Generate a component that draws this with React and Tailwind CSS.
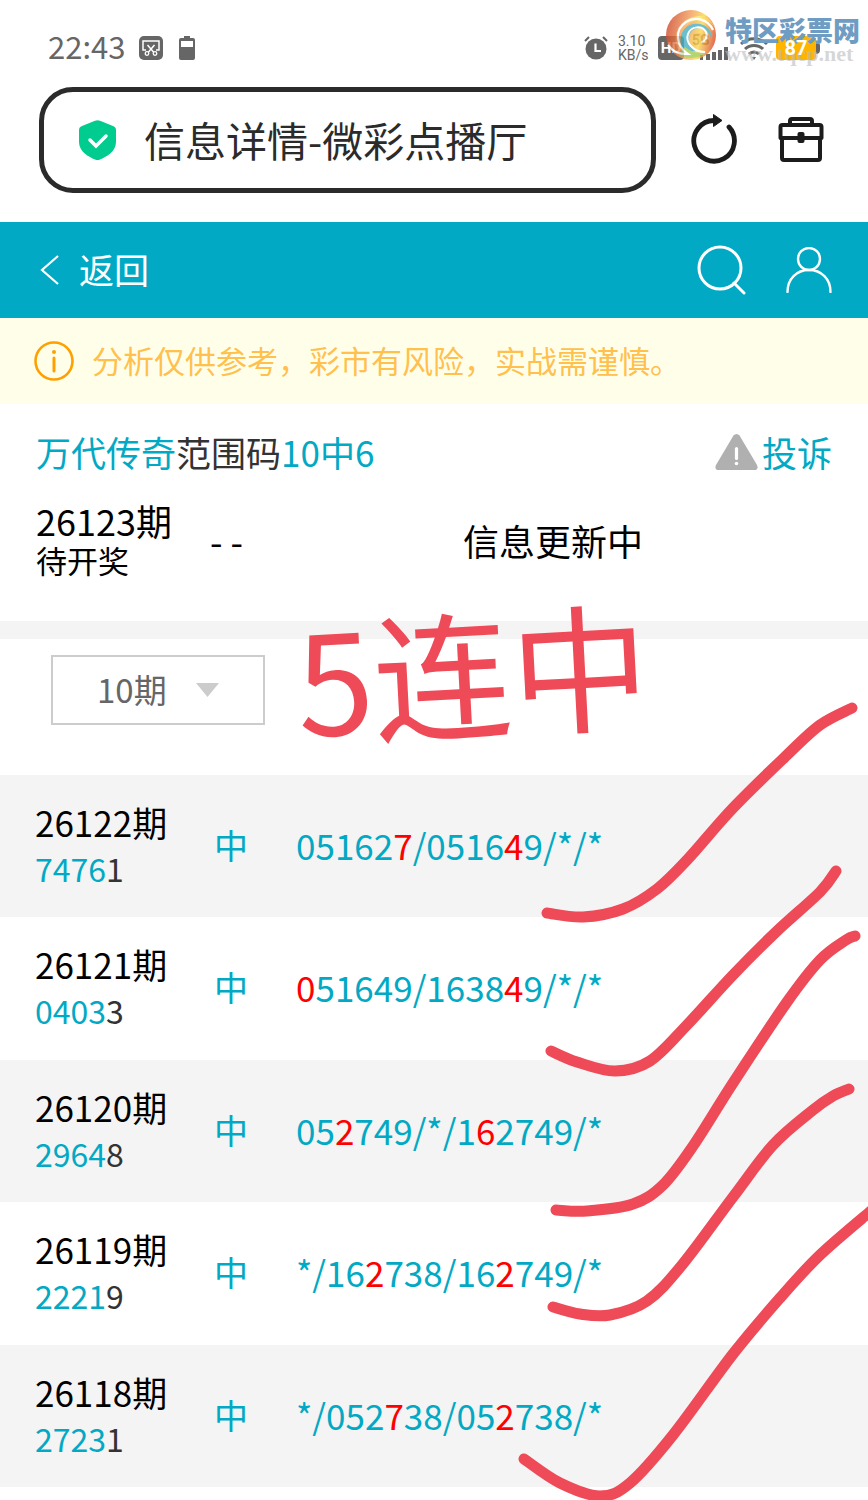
import React from "react";

const rows = [
  { period: "26122期", draw: "7476", last: "1", codes: "051627/051649/*/*", hits: [5, 11] },
  { period: "26121期", draw: "0403", last: "3", codes: "051649/163849/*/*", hits: [0, 11] },
  { period: "26120期", draw: "2964", last: "8", codes: "052749/*/162749/*", hits: [2, 10] },
  { period: "26119期", draw: "2221", last: "9", codes: "*/162738/162749/*", hits: [4, 11] },
  { period: "26118期", draw: "2723", last: "1", codes: "*/052738/052738/*", hits: [5, 11] },
];

const strokes = [
  [[547, 913], [583, 917], [623, 909], [657, 889], [687, 860], [733, 808], [787, 755], [820, 725], [852, 708]],
  [[551, 1051], [577, 1062], [615, 1071], [650, 1061], [687, 1025], [733, 975], [776, 932], [820, 892], [836, 871]],
  [[556, 1210], [587, 1211], [633, 1204], [663, 1185], [693, 1146], [733, 1083], [787, 1002], [820, 960], [846, 940], [855, 936]],
  [[553, 1307], [580, 1314], [610, 1315], [647, 1301], [682, 1265], [733, 1197], [773, 1145], [813, 1110], [833, 1096], [849, 1089]],
  [[524, 1459], [560, 1483], [600, 1496], [630, 1483], [673, 1435], [733, 1354], [780, 1298], [820, 1255], [872, 1210]],
];

// smooth curve through all the points
function curve(p) {
  let d = `M${p[0][0]} ${p[0][1]}`;
  for (let i = 0; i < p.length - 1; i++) {
    const a = p[i - 1] || p[i];
    const b = p[i];
    const c = p[i + 1];
    const e = p[i + 2] || c;
    d += ` C${b[0] + (c[0] - a[0]) / 6} ${b[1] + (c[1] - a[1]) / 6} ${c[0] - (e[0] - b[0]) / 6} ${c[1] - (e[1] - b[1]) / 6} ${c[0]} ${c[1]}`;
  }
  return d;
}

function StatusBar() {
  return (
    <div className="flex h-[87px] items-center pt-2 pr-12 pl-12 text-[#666]">
      <span className="pb-1 text-[31px] leading-10">22:43</span>
      <svg className="ml-[14px] h-6 w-6" viewBox="0 0 24 24" fill="none">
        <rect width="24" height="24" rx="5" fill="#666" />
        <path d="M7 14H4V5h16v9h-3" stroke="#fff" strokeWidth="1.5" />
        <path d="M8.5 9l6 7M15.500 9l-6 7" stroke="#fff" strokeWidth="1.5" />
        <circle cx="8" cy="17.500" r="1.800" stroke="#fff" strokeWidth="1.300" />
        <circle cx="16" cy="17.500" r="1.800" stroke="#fff" strokeWidth="1.300" />
      </svg>
      <svg className="ml-4 h-6 w-4" viewBox="0 0 16 24">
        <path d="M5 0h6v2h3a2 2 0 0 1 2 2v18a2 2 0 0 1-2 2H2a2 2 0 0 1-2-2V4a2 2 0 0 1 2-2h3z" fill="#666" />
        <rect x="2" y="5" width="12" height="6" fill="#fff" />
      </svg>
      <svg className="ml-auto h-6 w-6" viewBox="0 0 24 24" fill="none">
        <circle cx="12" cy="13" r="10.500" fill="#666" />
        <path d="M1 5l4-4M23 5l-4-4" stroke="#666" strokeWidth="2" />
        <path d="M11.500 7.500V15H17" stroke="#fff" strokeWidth="2.200" />
      </svg>
      <div className="ml-[10px] w-8 font-[Roboto] text-[14px] leading-[14px]">
        <div>3.10</div>
        <div>KB/s</div>
      </div>
      <span className="ml-2 w-[26px] rounded bg-[#666] text-center font-[Roboto] text-[15px] leading-6 font-bold text-white">HD</span>
      <div className="relative ml-2 h-6 w-9">
        <span className="absolute -top-1 left-0 font-[Roboto] text-[14px] leading-4 font-bold">5G</span>
        <svg className="h-6 w-9" viewBox="0 0 36 24" fill="#666">
          <path d="M8 19h3v5H8zM14 18h4v6h-4zM20 16h4v8h-4zM26 14h4v10h-4zM32 11h4v13h-4z" />
        </svg>
      </div>
      <svg className="ml-3 h-6 w-7" viewBox="0 0 28 24" fill="none" stroke="#666" strokeWidth="3">
        <path d="M1 8a19 19 0 0 1 26 0M5 13a13 13 0 0 1 18 0M9 18a7 7 0 0 1 10 0" />
        <path d="M12 21h4l-2 3z" fill="#666" stroke="none" />
      </svg>
      <div className="ml-2 flex items-center">
        <div className="h-6 w-10 rounded bg-[#ffb400] text-center">
          <span className="relative z-10 font-[Roboto] text-[20px] leading-6 font-bold text-white">87</span>
        </div>
        <span className="h-3 w-1 rounded-r bg-[#666]" />
      </div>
    </div>
  );
}

function Watermark() {
  return (
    <div className="pointer-events-none absolute top-2 right-2 flex gap-[7px]">
      <svg className="h-[54px] w-[54px]" viewBox="0 0 54 54" fill="none" opacity="0.8">
        <defs>
          <linearGradient id="ball" x1="0" y1="0.300" x2="1" y2="0.500">
            <stop offset="0" stopColor="#d04428" />
            <stop offset="0.450" stopColor="#f3a05a" />
            <stop offset="0.700" stopColor="#fbd84e" />
            <stop offset="1" stopColor="#dc4c2c" />
          </linearGradient>
          <linearGradient id="top" x1="0" y1="0" x2="1" y2="0">
            <stop offset="0" stopColor="#f08a50" />
            <stop offset="0.600" stopColor="#fdec52" />
            <stop offset="1" stopColor="#f7b03a" />
          </linearGradient>
        </defs>
        <circle cx="27" cy="27" r="25" fill="url(#ball)" />
        <path d="M13 40C8 24 17 10 34 8c9-1 14 5 16 11C44 8 26 10 20 22c-4 9-2 17 2 23z" fill="url(#top)" />
        <path d="M20 44c-7-12-3-25 9-28 12-2 20 6 19 16-3-10-10-14-17-11-9 4-8 16 1 22z" fill="#45aec2" />
        <path d="M15 46c8 6 20 5 27-2-7 2-15 0-21-5z" fill="#a0cc50" />
        <path d="M28 38c-4-6-1-13 6-13 6 0 8 6 5 10 0-4-3-6-6-5-3 2-3 5-1 8z" fill="#f6c048" />
        <path d="M4 37C10 45 16 46 24 46C12 38 10 22 22 14c9-6 22-3 27 8" stroke="#fff" strokeWidth="2.200" />
        <path d="M41 44c-12 0-20-10-17-18 3-8 14-9 18-2 2 5-1 10-5 10" stroke="#fff" strokeWidth="2" />
      </svg>
      <div>
        <div className="text-[27px] leading-[44px] font-black text-[#6f9cc3]">特区彩票网</div>
        <div className="-mt-2 font-['Liberation_Serif'] text-[22px] leading-5 font-bold text-[#bbbbbb]/60">www.tqcp.net</div>
      </div>
    </div>
  );
}

function AddressBar() {
  return (
    <div className="flex h-[135px] items-start pr-11 pl-[39px]">
      <label className="flex h-[106px] min-w-0 flex-1 items-center rounded-[34px] border-5 border-[#2b2b2b] pl-[35px]">
        <svg className="h-10 w-[37px] shrink-0" viewBox="0 0 37 40" fill="none">
          <path d="M16 0.800q2.500-1.300 5 0L34 6q3 1.200 3 4v12c0 10-10 15-16 17.500q-2.500 1-5 0C10 37 0 32 0 22V10q0-2.800 3-4z" fill="#00cc8f" />
          <path d="M11 20l6 6 10-10" stroke="#fff" strokeWidth="3.500" strokeLinecap="round" />
        </svg>
        <input
          className="ml-7 min-w-0 flex-1 bg-transparent pb-[2px] text-[41px] leading-[56px] text-[#2b2b2b] outline-none"
          aria-label="地址"
          defaultValue="信息详情-微彩点播厅"
        />
      </label>
      <button className="mt-[26px] ml-[35px]" aria-label="刷新">
        <svg className="h-[52px] w-[46px]" viewBox="0 0 46 52" fill="none">
          <path d="M38 14a20.300 20.300 0 1 1-15-6.500" stroke="#1c1c1c" strokeWidth="4.800" strokeLinecap="round" />
          <path d="M22.500 1.500v12l8.500-6z" fill="#1c1c1c" stroke="#1c1c1c" strokeLinejoin="round" />
        </svg>
      </button>
      <button className="mt-[30px] ml-[41px]" aria-label="工具箱">
        <svg className="h-[46px] w-[46px]" viewBox="0 0 46 46" fill="none" stroke="#1c1c1c" strokeWidth="4" strokeLinejoin="round">
          <path d="M12 8V4q0-2 2-2h18q2 0 2 2v4M2.500 10q0-2 2-2h37q2 0 2 2v11h-41zM4 21v20q0 2 2 2h34q2 0 2-2V21" />
          <rect x="21.500" y="17" width="3" height="7" />
        </svg>
      </button>
    </div>
  );
}

function Header() {
  return (
    <header className="flex h-24 items-center bg-[#02a9c4] pr-9 pl-10 text-white">
      <a href="#" className="flex items-center text-[35px] leading-[48px]">
        <svg className="mr-5 h-[30px] w-[19px]" viewBox="0 0 19 30" fill="none" stroke="#fff" strokeWidth="2.200">
          <path d="M18 1L2 15l16 14" />
        </svg>
        <span className="pb-[3px]">返回</span>
      </a>
      <button className="ml-auto" aria-label="搜索">
        <svg className="h-[50px] w-[50px]" viewBox="0 0 50 50" fill="none" stroke="#fff" strokeWidth="3" strokeLinecap="round">
          <circle cx="24" cy="23" r="21" />
          <path d="M38 38l10 10" />
        </svg>
      </button>
      <button className="ml-10" aria-label="我的">
        <svg className="h-[46px] w-[46px]" viewBox="0 0 46 46" fill="none" stroke="#fff" strokeWidth="2.400" strokeLinecap="round">
          <circle cx="23" cy="12" r="11" />
          <path d="M1.500 45c0-13 9-22 21.500-22s21.500 9 21.500 22" />
        </svg>
      </button>
    </header>
  );
}

function Current() {
  return (
    <section className="h-[217px] px-9 pt-6">
      <div className="flex items-center justify-between text-[35px] leading-[48px] text-[#02a9c4]">
        <h1>
          万代传奇<span className="text-[#333]">范围码</span>10中6
        </h1>
        <a href="#" className="flex items-center">
          <svg className="mr-1 h-9 w-[43px]" viewBox="0 0 43 36">
            <path d="M18.500 1.500q3-3 6 0L42 31q2 5-3 5H4q-5 0-3-5z" fill="#b0b0b0" />
            <path d="M21.500 14.500v10" stroke="#fff" strokeWidth="3.200" strokeLinecap="round" />
            <circle cx="21.500" cy="29.500" r="1.800" fill="#fff" />
          </svg>
          投诉
        </a>
      </div>
      <div className="mt-5 flex items-center text-black">
        <div className="w-[174px]">
          <div className="text-[36px] leading-[48px]">26123期</div>
          <div className="text-[31px] leading-8">待开奖</div>
        </div>
        <div className="w-[253px] pt-2 text-[36px] leading-[48px]">- -</div>
        <div className="pt-2 text-[36px] leading-[48px]">信息更新中</div>
      </div>
    </section>
  );
}

function App() {
  return (
    <div className="relative min-h-[1500px] overflow-hidden bg-white font-['Noto_Sans_CJK_SC',sans-serif]">
      <StatusBar />
      <Watermark />
      <AddressBar />
      <Header />
      <div className="flex h-[86px] items-center bg-[#ffffe9] pl-[34px] text-[31px] leading-[44px] text-[#ffc04d]">
        <svg className="mr-[18px] h-10 w-10" viewBox="0 0 40 40" fill="none" stroke="#ff9f00">
          <circle cx="20" cy="20" r="18.500" strokeWidth="2.600" />
          <path d="M20 17v13" strokeWidth="3" strokeLinecap="round" />
          <circle cx="20" cy="11" r="2" fill="#ff9f00" stroke="none" />
        </svg>
        <span className="pb-[3px]">分析仅供参考，彩市有风险，实战需谨慎。</span>
      </div>
      <Current />

      <div className="h-[154px] border-t-18 border-[#f4f4f4] pt-4 pl-[51px]">
        <div className="relative w-[214px]">
          <select
            aria-label="期数"
            className="h-[70px] w-full appearance-none border-2 border-[#ccc] bg-white pl-11 text-[33px] text-[#666]"
          >
            <option>10期</option>
          </select>
          <svg className="pointer-events-none absolute top-7 right-[46px] h-[14px] w-[23px]" viewBox="0 0 23 14">
            <path d="M0 0h23L11.500 14z" fill="#ccc" />
          </svg>
        </div>
      </div>

      <table className="w-full table-fixed">
        <tbody>
          {rows.map((r) => (
            <tr key={r.period} className="h-[142px] odd:bg-[#f4f4f4] even:h-[143px]">
              <td className="w-[214px] pb-[3px] pl-[35px]">
                <div className="text-[35px] leading-[46px] text-black">{r.period}</div>
                <div className="text-[32px] leading-[46px] text-[#02a9c4]">
                  {r.draw}
                  <span className="text-[#333]">{r.last}</span>
                </div>
              </td>
              <td className="w-[82px] pb-[3px] text-[34px] leading-[48px] text-[#02a9c4]">中</td>
              <td className="pb-[3px] text-[35px] leading-[48px] text-[#02a9c4]">
                {r.codes.split("").map((c, i) => (
                  <span key={i} className={r.hits.includes(i) ? "text-[#ff0000]" : ""}>
                    {c}
                  </span>
                ))}
              </td>
            </tr>
          ))}
        </tbody>
      </table>

      {/* 手写标注 */}
      <div className="pointer-events-none absolute top-[568px] left-[296px] -rotate-3 text-[138px] leading-[200px] whitespace-nowrap text-[#ee4a58]">
        5连中
      </div>
      <svg className="pointer-events-none absolute top-0 left-0 h-[1500px] w-[868px]" viewBox="0 0 868 1500" fill="none">
        {strokes.map((s, i) => (
          <path key={i} d={curve(s)} stroke="#ee4a58" strokeWidth="11" strokeLinecap="round" strokeLinejoin="round" />
        ))}
      </svg>
    </div>
  );
}

export default App;
